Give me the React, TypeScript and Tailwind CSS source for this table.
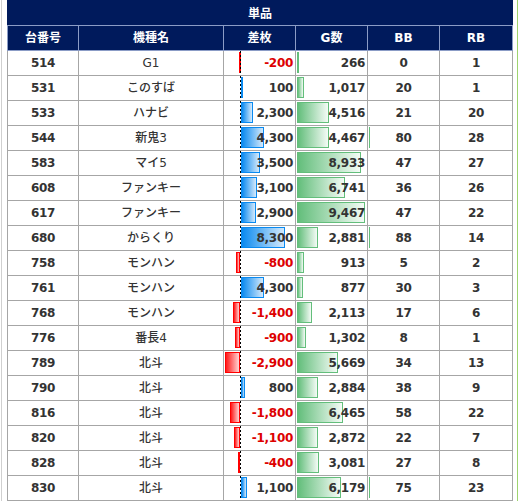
import React from "react";

type Row = {
  id: number;
  name: string;
  diff: number;
  g: number;
  bb: number;
  rb: number;
  leak?: boolean;
};

const rows: Row[] = [
  { id: 514, name: "G1", diff: -200, g: 266, bb: 0, rb: 1 },
  { id: 531, name: "このすば", diff: 100, g: 1017, bb: 20, rb: 1 },
  { id: 533, name: "ハナビ", diff: 2300, g: 4516, bb: 21, rb: 20 },
  { id: 544, name: "新鬼3", diff: 4300, g: 4467, bb: 80, rb: 28, leak: true },
  { id: 583, name: "マイ5", diff: 3500, g: 8933, bb: 47, rb: 27 },
  { id: 608, name: "ファンキー", diff: 3100, g: 6741, bb: 36, rb: 26 },
  { id: 617, name: "ファンキー", diff: 2900, g: 9467, bb: 47, rb: 22 },
  { id: 680, name: "からくり", diff: 8300, g: 2881, bb: 88, rb: 14, leak: true },
  { id: 758, name: "モンハン", diff: -800, g: 913, bb: 5, rb: 2 },
  { id: 761, name: "モンハン", diff: 4300, g: 877, bb: 30, rb: 3 },
  { id: 768, name: "モンハン", diff: -1400, g: 2113, bb: 17, rb: 6 },
  { id: 776, name: "番長4", diff: -900, g: 1302, bb: 8, rb: 1 },
  { id: 789, name: "北斗", diff: -2900, g: 5669, bb: 34, rb: 13 },
  { id: 790, name: "北斗", diff: 800, g: 2884, bb: 38, rb: 9 },
  { id: 816, name: "北斗", diff: -1800, g: 6465, bb: 58, rb: 22 },
  { id: 820, name: "北斗", diff: -1100, g: 2872, bb: 22, rb: 7 },
  { id: 828, name: "北斗", diff: -400, g: 3081, bb: 27, rb: 8 },
  { id: 830, name: "北斗", diff: 1100, g: 6179, bb: 75, rb: 23, leak: true },
];

const fmt = (n: number) => n.toLocaleString("en-US");
const DIFF_SCALE = 44 / 8300;
const G_SCALE = 68 / 9467;

const num = "font-['DejaVu_Sans','Noto_Sans_CJK_JP',sans-serif] font-bold text-[12px] tracking-[-0.3px] text-[#333]";
const cellBase = "h-[25px] border-r border-b border-[#a6a6a6] flex items-center";

function DiffCell({ v }: { v: number }) {
  const w = Math.max(1, Math.round(Math.abs(v) * DIFF_SCALE));
  return (
    <div className={`${cellBase} relative justify-end pr-[2px]`}>
      {v >= 0 ? (
        <div
          className="absolute top-[1px] h-[21px] left-[17px] border border-[#0a8af0] bg-[linear-gradient(to_right,#0a8af0,#d4e9fb)]"
          style={{ width: w }}
        />
      ) : (
        <div
          className="absolute top-[1px] h-[21px] border border-[#ff0000] bg-[linear-gradient(to_right,#ff1a1a,#ffd6d6)]"
          style={{ width: w, left: 16 - w }}
        />
      )}
      <div className="absolute left-[16px] top-0 bottom-0 w-px bg-[repeating-linear-gradient(to_bottom,#000_0px,#000_2px,transparent_2px,transparent_4px)]" />
      <span className={`relative ${num} ${v < 0 ? "text-[#dd0000]" : ""}`}>{fmt(v)}</span>
    </div>
  );
}

function GCell({ v }: { v: number }) {
  const w = Math.max(2, Math.round(v * G_SCALE));
  return (
    <div className={`${cellBase} relative justify-end pr-[2px]`}>
      <div
        className="absolute top-[1px] h-[21px] left-[1px] border border-[#63be7b] bg-[linear-gradient(to_right,#63be7b,#f4fbf6)]"
        style={{ width: w }}
      />
      <span className={`relative ${num}`}>{fmt(v)}</span>
    </div>
  );
}

export default function App() {
  const headers = ["台番号", "機種名", "差枚", "G数", "BB", "RB"];
  return (
    <div className="w-[519px] h-[501px] bg-white flex overflow-hidden">
      <div className="ml-[1px] w-px bg-[#d0d0d0]" />
      <div className="ml-[5px] w-[506px] flex flex-col">
        <div className="h-[26px] bg-[#001a5c] border-b border-[#8b9cc6] flex items-center justify-center text-white font-bold text-[12px] font-['Noto_Sans_CJK_JP',sans-serif]">
          単品
        </div>
        <div className="grid grid-cols-[72px_145px_72px_72px_72px_73px]">
          {headers.map((h, i) => (
            <div
              key={h}
              className={`h-[25px] bg-[#001a5c] border-r border-b border-[#8b9cc6] ${i === 0 ? "border-l" : ""} flex items-center justify-center text-white font-bold text-[12px] font-['DejaVu_Sans','Noto_Sans_CJK_JP',sans-serif]`}
            >
              {h}
            </div>
          ))}
          {rows.map((r) => (
            <React.Fragment key={r.id}>
              <div className={`${cellBase} border-l justify-center`}>
                <span className={num}>{r.id}</span>
              </div>
              <div className={`${cellBase} justify-center`}>
                <span className="font-['DejaVu_Sans','Noto_Sans_CJK_JP',sans-serif] text-[12px] text-[#333] font-medium">
                  {r.name}
                </span>
              </div>
              <DiffCell v={r.diff} />
              <GCell v={r.g} />
              <div className={`${cellBase} relative justify-center`}>
                {r.leak && <div className="absolute left-[1px] top-[1px] h-[21px] w-px bg-[#63be7b]" />}
                <span className={num}>{r.bb}</span>
              </div>
              <div className={`${cellBase} justify-center`}>
                <span className={num}>{r.rb}</span>
              </div>
            </React.Fragment>
          ))}
        </div>
      </div>
      <div className="ml-[4px] w-px bg-[#9fd46f]" />
    </div>
  );
}
